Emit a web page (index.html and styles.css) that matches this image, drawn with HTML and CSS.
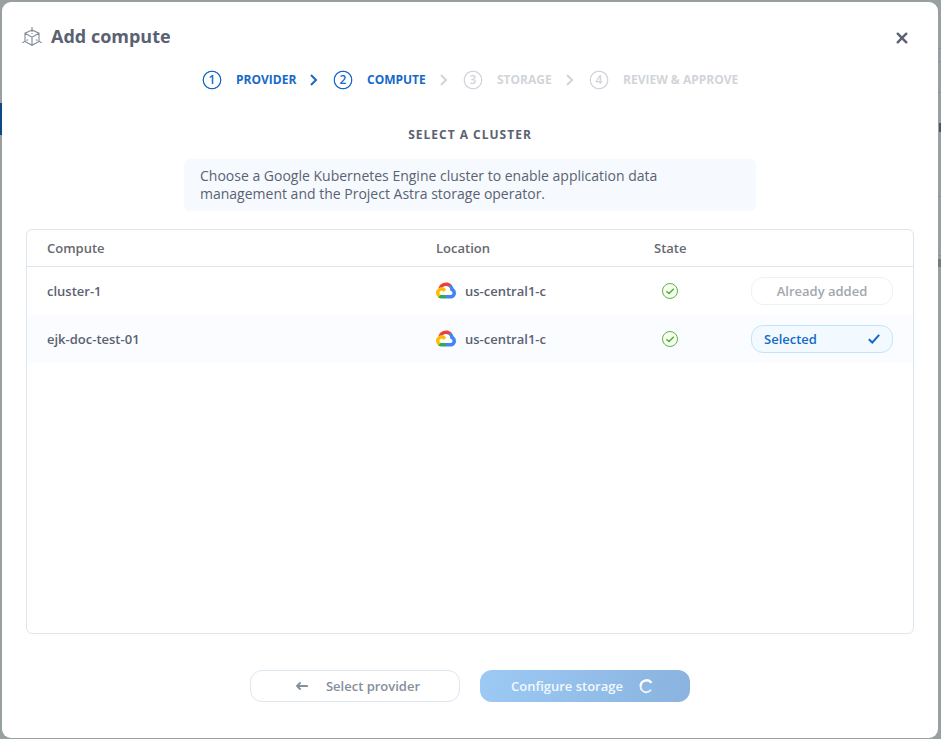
FILE: index.html
```html
<!DOCTYPE html>
<html lang="en">
<head>
<meta charset="utf-8">
<title>Add compute</title>
<link rel="stylesheet" href="styles.css">
</head>
<body>
<svg class="defs" width="0" height="0" aria-hidden="true">
  <symbol id="gcp" viewBox="0 0 256 206">
    <path fill="#ea4335" d="M170.252 56.819l22.253-22.253 1.483-9.37C153.437-11.677 88.976-7.496 52.42 33.92 42.267 45.423 34.734 59.764 30.717 74.573l7.97-1.123 44.505-7.34 3.436-3.513c19.797-21.742 53.27-24.667 76.128-6.168l7.496.39z"/>
    <path fill="#4285f4" d="M224.205 73.918a100.249 100.249 0 0 0-30.217-48.722l-31.232 31.232a55.515 55.515 0 0 1 20.379 44.037v5.544c15.35 0 27.797 12.445 27.797 27.796 0 15.352-12.446 27.485-27.797 27.485h-55.671l-5.466 5.934v33.34l5.466 5.231h55.67c39.93.311 72.553-31.494 72.864-71.424a72.303 72.303 0 0 0-31.793-60.453"/>
    <path fill="#34a853" d="M71.87 205.796h55.593V161.29H71.87a27.275 27.275 0 0 1-11.4-2.498l-7.887 2.42-22.409 22.253-1.952 7.574c12.567 9.489 27.9 14.825 43.647 14.757"/>
    <path fill="#fbbc05" d="M71.87 61.425C31.94 61.663-.237 94.228.001 134.158a72.301 72.301 0 0 0 28.222 56.88l32.248-32.246c-13.99-6.322-20.208-22.786-13.887-36.776 6.32-13.99 22.786-20.208 36.775-13.888a27.796 27.796 0 0 1 13.887 13.888l32.248-32.248A72.224 72.224 0 0 0 71.87 61.425z"/>
  </symbol>
  <symbol id="ok" viewBox="0 0 16 16">
    <circle cx="8" cy="8" r="7.5" fill="#f8fff0" stroke="#5db245"/>
    <path d="M4.4 8.2L7 10.5l4.800-4.800" fill="none" stroke="#4fae3a" stroke-width="1.500"/>
  </symbol>
  <symbol id="chev" viewBox="0 0 8 12">
    <path d="M1 1l5 5-5 5" fill="none" stroke="currentColor" stroke-width="2"/>
  </symbol>
</svg>
<i class="edge edge-nav"></i>
<i class="edge line line-a"></i>
<i class="edge line line-b"></i>
<i class="edge line line-c"></i>
<i class="edge line line-d"></i>
<i class="edge line line-e"></i>
<i class="edge edge-text"></i>
<i class="edge edge-bar"></i>
<main class="modal">
  <header class="head">
    <svg class="cube" width="20" height="20" viewBox="0 0 20 20" fill="none" stroke="#7f8b9c" stroke-width="1.100">
      <path d="M10 3l7 3.2v8.2L10 18.3 3 14.4V6.2zM3 6.2l7 4 7-4M10 10.2v8.1M10 0v5M10 6v1M3 14.2L.5 15.8M17 14.2l2.5 1.6M4.5 13.5l1.5-.9M15.500 13.500l-1.500-.9"/>
    </svg>
    <h1>Add compute</h1>
    <svg class="close" width="12" height="12" viewBox="0 0 12 12" fill="none" stroke="#5a6272" stroke-width="2.400" stroke-linecap="round"><path d="M1.700 1.700l8.600 8.600M10.300 1.700l-8.600 8.600"/></svg>
  </header>
  <nav class="steps">
    <span class="num">1</span><span class="w1">PROVIDER</span><svg class="chev"><use href="#chev"/></svg>
    <span class="num">2</span><span class="w2">COMPUTE</span><svg class="chev off"><use href="#chev"/></svg>
    <span class="num off">3</span><span class="w3 off">STORAGE</span><svg class="chev off"><use href="#chev"/></svg>
    <span class="num off">4</span><span class="w4 off">REVIEW &amp; APPROVE</span>
  </nav>
  <h2>SELECT A CLUSTER</h2>
  <p class="info">Choose a Google Kubernetes Engine cluster to enable application data management and the Project Astra storage operator.</p>
  <section class="table">
    <div class="row row-head"><span>Compute</span><span>Location</span><span>State</span><span></span></div>
    <div class="row">
      <span>cluster-1</span>
      <span class="loc"><svg width="20" height="17"><use href="#gcp"/></svg>us-central1-c</span>
      <svg class="ok" width="16" height="16"><use href="#ok"/></svg>
      <span class="pill">Already added</span>
    </div>
    <div class="row row-picked">
      <span>ejk-doc-test-01</span>
      <span class="loc"><svg width="20" height="17"><use href="#gcp"/></svg>us-central1-c</span>
      <svg class="ok" width="16" height="16"><use href="#ok"/></svg>
      <span class="pill pill-on">Selected<svg width="12" height="10" viewBox="0 0 12 10" fill="none" stroke="currentColor" stroke-width="2"><path d="M.8 5.200L4.300 8.500 11.200.8"/></svg></span>
    </div>
  </section>
  <footer class="actions">
    <span class="btn"><svg width="12" height="8" viewBox="0 0 12 8" fill="none" stroke="currentColor" stroke-width="1.800" stroke-linecap="round" stroke-linejoin="round"><path d="M11.200 4H1M4 1L1 4l3 3"/></svg>Select provider</span>
    <span class="btn btn-go">Configure storage<svg width="14" height="15" viewBox="0 0 14 15" fill="none" stroke="#fff"><path d="M12.500 3.900A6 6 0 0 0 1.600 7" stroke-width="2.400"/><path d="M1.600 7A5.700 5.700 0 0 0 7 13.200a5.700 5.700 0 0 0 5-2.400" stroke-width="1.900" opacity=".85"/></svg></span>
  </footer>
</main>
</body>
</html>
```

FILE: styles.css
```css
* { box-sizing: border-box; }
body {
  margin: 0;
  width: 941px;
  height: 739px;
  padding: 2px 3px 1px 2px;
  overflow: hidden;
  background: #98a0a2;
  color: #5a6272;
  font: 600 13px/18px "Open Sans", "Noto Sans", sans-serif;
}
.defs { position: absolute; }
.edge { position: absolute; right: 0; width: 3px; }
.edge-nav { left: 0; right: auto; top: 103px; height: 32px; width: 2px; background: #0d4788; }
.line { height: 1px; background: #8592a2; }
.line-a { top: 48px; }
.line-b { top: 61px; }
.line-c { top: 92px; }
.line-d { top: 196px; }
.line-e { top: 255px; }
.edge-text { top: 123px; height: 9px; width: 2px; background: #4b5564; }
.edge-bar { top: 259px; height: 8px; background: #777b7d; }

.modal {
  display: flex;
  flex-direction: column;
  height: 736px;
  padding: 0 24px;
  border-radius: 9px;
  background: #fff;
}
.head { display: flex; align-items: center; height: 68px; margin: 0 6px 0 -4px; }
.cube { margin: 2px 9px 0 0; }
h1 { margin: 0; font-size: 18px; line-height: 24px; font-weight: 700; }
.close { margin: 3px 0 0 auto; }

.steps {
  display: flex;
  align-items: center;
  height: 20px;
  padding-left: 176px;
  color: #1669c9;
  font-size: 12px;
  font-weight: 700;
  white-space: nowrap;
}
.num {
  display: flex;
  align-items: center;
  justify-content: center;
  width: 20px;
  height: 20px;
  margin-right: 14px;
  background: radial-gradient(circle at center, transparent 7.700px, currentColor 8.400px, currentColor 9px, transparent 9.700px);
  font-weight: 600;
  line-height: 18px;
}
.chev { width: 8px; height: 12px; margin: 0 15px 0 13px; }
.w1 { width: 61px; }
.w2 { width: 60px; }
.w3 { width: 56px; }
.off { color: #d1d5d9; }

h2 { margin: 36px 0 0; text-align: center; font-size: 12px; line-height: 18px; font-weight: 700; letter-spacing: 1px; }
.info {
  width: 572px;
  height: 52px;
  margin: 15px 0 0 158px;
  padding: 8px 16px;
  border-radius: 6px;
  background: #f6fafe;
  font-size: 14px;
  line-height: 18px;
  font-weight: 400;
}
.table { height: 405px; margin-top: 18px; border: 1px solid #dbe6ef; border-radius: 6px; }
.row {
  display: grid;
  grid-template-columns: 389px 188px 92px 142px;
  justify-content: start;
  align-items: center;
  height: 48px;
  padding-left: 20px;
}
.row-head { height: 37px; border-bottom: 1px solid #dbe6ef; color: #66696e; }
.row-head span:nth-child(3) { margin-left: 30px; }
.row-picked { background: #fafcff; }
.loc { display: flex; align-items: center; gap: 9px; }
.loc svg { margin-bottom: 2px; }
.ok { margin-left: 38px; }
.row .pill { margin-left: 35px; }
.pill {
  display: flex;
  align-items: center;
  justify-content: center;
  width: 142px;
  height: 28px;
  border: 1px solid #eef1f4;
  border-radius: 12px;
  background: #fff;
  color: #a3a7ad;
}
.pill-on { justify-content: space-between; padding: 0 12px; border-color: #c4e4fb; background: #f3faff; color: #1669c9; }

.actions { display: flex; gap: 20px; margin: 36px 0 0 224px; }
.btn {
  display: flex;
  align-items: center;
  justify-content: center;
  gap: 18px;
  width: 210px;
  height: 32px;
  padding-left: 6px;
  border: 1px solid #dde7f0;
  border-radius: 12px;
  color: #848e9c;
}
.btn-go { gap: 16px; padding: 0 6px 0 0; border: 0; background: linear-gradient(100deg, #9ccaf5, #8ab3df); color: #f3f8fd; }
```
